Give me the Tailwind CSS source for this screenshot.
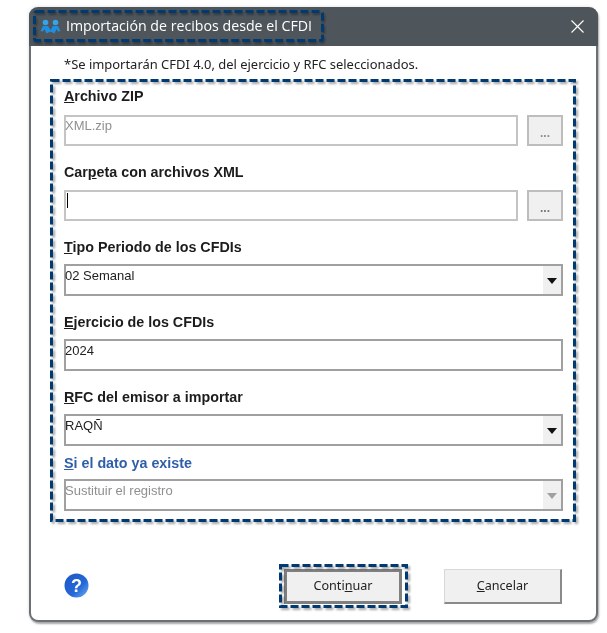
<!DOCTYPE html>
<html><head><meta charset="utf-8"><script src="https://cdn.jsdelivr.net/npm/@tailwindcss/browser@4"></script></head>
<body class="bg-white">
<div class="w-[607px] h-[633px] pl-[29px] pt-[7px] overflow-hidden font-['Liberation_Sans',sans-serif] blur-[0.3px]">
  <div class="relative w-[569px] h-[615px] bg-white rounded-t-[9px] rounded-b-[9px] border-x-2 border-b-2 border-x-[#6b7074] border-b-[#6b7074] shadow-[1px_2px_2px_rgba(0,0,0,0.35),-1px_-1px_3px_rgba(0,0,0,0.08)] flex flex-col">
    <div class="relative h-[39px] -mx-[2px] bg-[#4f565b] rounded-t-[9px] flex items-center pl-[11px] pr-[14px] shrink-0">
      <svg class="w-[21px] h-[16px]" viewBox="0 0 21 16"><circle cx="5.5" cy="3.5" r="2.8" fill="#35a4ee"/><circle cx="15.5" cy="3.5" r="2.8" fill="#35a4ee"/><path d="M0.5 12 L3 7 H8 L10.5 11 L13 7 H18 L20.5 12 L18 12.5 L16.5 10 L14.5 14.5 L10.5 12.5 L6.5 14.5 L4.5 10 L3 12.5Z" fill="#1f8fe0"/></svg>
      <span class="ml-[5px] text-white text-[14.2px] leading-none font-['Open_Sans',sans-serif]">Importación de recibos desde el CFDI</span>
      <svg class="ml-auto w-[13px] h-[13px]" viewBox="0 0 13 13"><path d="M0.5 0.5 L12.5 12.5 M12.5 0.5 L0.5 12.5" stroke="#fff" stroke-width="1.1" fill="none"/></svg>
    </div>
    <div class="flex-1 flex flex-col pl-[33px] pr-[33px]">
      <p class="mt-[10px] h-[16px] text-[12.95px] leading-[16px] text-[#222] font-['Noto_Sans',sans-serif] whitespace-nowrap">*Se importarán CFDI 4.0, del ejercicio y RFC seleccionados.</p>
      <div class="mt-[16px] flex flex-col w-[499px]">
        <label class="h-[17px] text-[14.3px] leading-[17px] font-bold text-[#1c1c1c]"><u>A</u>rchivo ZIP</label>
        <div class="mt-[10px] flex gap-[9px]">
          <div class="w-[454px] h-[31px] border-2 border-[#c4c4c4] text-[13px] leading-[17px] text-[#909090]"><span class="-ml-px">XML.zip</span></div>
          <div class="w-[36px] h-[31px] bg-[#f0f0f0] border-2 border-[#bdbdbd] flex items-center justify-center pt-[5px] text-[12px] leading-none font-bold text-[#8f8f8f]">...</div>
        </div>
        <label class="mt-[18px] h-[17px] text-[14.3px] leading-[17px] font-bold text-[#1c1c1c]">Car<u>p</u>eta con archivos XML</label>
        <div class="mt-[9px] flex gap-[9px]">
          <div class="w-[454px] h-[31px] border-2 border-[#c4c4c4] pl-[1px] pt-[1px]"><div class="w-px h-[15px] bg-black"></div></div>
          <div class="w-[36px] h-[31px] bg-[#f0f0f0] border-2 border-[#bdbdbd] flex items-center justify-center pt-[5px] text-[12px] leading-none font-bold text-[#777]">...</div>
        </div>
        <label class="mt-[18px] h-[17px] text-[14.3px] leading-[17px] font-bold text-[#1c1c1c]"><u>T</u>ipo Periodo de los CFDIs</label>
        <div class="mt-[8px] h-[32px] flex border-2 border-[#a0a0a0]">
          <div class="flex-1 text-[13px] leading-[19px] text-[#222] -ml-px">02 Semanal</div>
          <div class="w-[19px] bg-[#f0f0f0] border-l border-white flex items-center justify-center"><svg class="w-[10px] h-[7px]" viewBox="0 0 10 7"><path d="M0 1H10L5 7Z" fill="#111"/></svg></div>
        </div>
        <label class="mt-[18px] h-[17px] text-[14.3px] leading-[17px] font-bold text-[#1c1c1c]"><u>E</u>jercicio de los CFDIs</label>
        <div class="mt-[8px] h-[32px] border-2 border-[#a0a0a0] text-[13px] leading-[19px] text-[#222]"><span class="-ml-px">2024</span></div>
        <label class="mt-[18px] h-[17px] text-[14.3px] leading-[17px] font-bold text-[#1c1c1c]"><u>R</u>FC del emisor a importar</label>
        <div class="mt-[8px] h-[32px] flex border-2 border-[#a0a0a0]">
          <div class="flex-1 text-[13px] leading-[19px] text-[#222] -ml-px">RAQÑ</div>
          <div class="w-[19px] bg-[#f0f0f0] border-l border-white flex items-center justify-center"><svg class="w-[10px] h-[7px]" viewBox="0 0 10 7"><path d="M0 1H10L5 7Z" fill="#111"/></svg></div>
        </div>
        <label class="mt-[9px] h-[17px] text-[14.3px] leading-[17px] font-bold text-[#2f5fa8]"><u>S</u>i el dato ya existe</label>
        <div class="mt-[7px] h-[32px] flex border-2 border-[#a0a0a0]">
          <div class="flex-1 text-[13px] leading-[19px] text-[#8f8f8f] -ml-px">Sustituir el registro</div>
          <div class="w-[19px] bg-[#f0f0f0] border-l border-white flex items-center justify-center"><svg class="w-[10px] h-[7px]" viewBox="0 0 10 7"><path d="M0 1H10L5 7Z" fill="#a0a0a0"/></svg></div>
        </div>
      </div>
      <div class="mt-[58px] flex items-start">
        <svg class="w-[25px] h-[25px] mt-[4px]" viewBox="0 0 25 25"><defs><linearGradient id="q" x1="0" y1="0" x2="1" y2="1"><stop offset="0" stop-color="#1f55c4"/><stop offset="0.6" stop-color="#2368d8"/><stop offset="1" stop-color="#6fb0f2"/></linearGradient></defs><circle cx="12.5" cy="12.5" r="12" fill="url(#q)"/><text x="12.5" y="19" text-anchor="middle" font-size="18" font-weight="700" fill="#fff" font-family="Liberation Sans">?</text></svg>
        <div class="ml-[195px] w-[118px] h-[35px] bg-[#f0f0f0] border-[3px] border-[#808080] flex items-center justify-center text-[12.6px] text-[#222] font-['Noto_Sans',sans-serif]">Conti<u>n</u>uar</div>
        <div class="ml-[42px] w-[118px] h-[35px] bg-[#f0f0f0] border border-[#d8d8d8] border-r-2 border-b-2 border-r-[#8a8a8a] border-b-[#8a8a8a] flex items-center justify-center text-[12.6px] text-[#222] font-['Noto_Sans',sans-serif]"><u>C</u>ancelar</div>
      </div>
    </div>
    <svg class="absolute left-[2px] top-[3px] drop-shadow-[1px_2px_1px_rgba(0,0,0,0.35)]" width="292" height="33" fill="none"><rect x="1.5" y="1.5" width="288" height="29" rx="2" stroke="#003a70" stroke-width="3" stroke-dasharray="8 3"/></svg>
    <svg class="absolute left-[19px] top-[72px] drop-shadow-[2px_2px_1px_rgba(0,0,0,0.35)]" width="530" height="447" fill="none"><rect x="1.5" y="1.5" width="523" height="440" stroke="#003a70" stroke-width="3" stroke-dasharray="8 3"/></svg>
    <svg class="absolute left-[248px] top-[557px] drop-shadow-[2px_2px_1px_rgba(0,0,0,0.35)]" width="133" height="48" fill="none"><rect x="1.5" y="1.5" width="126" height="41" stroke="#003a70" stroke-width="3" stroke-dasharray="8 3"/></svg>
  </div>
</div>
</body></html>
